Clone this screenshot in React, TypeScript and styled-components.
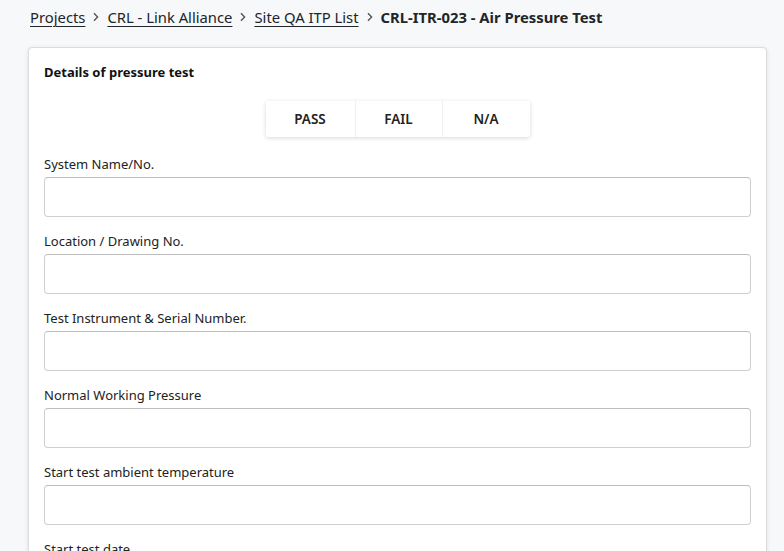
import React from "react";
import styled, { createGlobalStyle } from "styled-components";

const Global = createGlobalStyle`
  html, body { margin: 0; padding: 0; background: #f7f8f9; }
  body { font-family: "Segoe UI", "Noto Sans", "Liberation Sans", sans-serif; color: #212529; }
  * { box-sizing: border-box; }
`;

const Page = styled.div`
  padding: 5px 17px 0 28px;
  height: 551px;
  overflow: hidden;
`;

const Crumbs = styled.nav`
  display: flex;
  align-items: center;
  gap: 8px;
  padding-left: 2px;
  height: 24px;
  font-size: 14.8px;
  margin-bottom: 18px;
`;

const CrumbLink = styled.a`
  color: #212529;
  text-decoration: underline;
  text-underline-offset: 3px;
  text-decoration-thickness: 1px;
  cursor: pointer;
`;

const Current = styled.span`
  font-weight: 700;
  color: #212529;
`;

const Chevron = () => (
  <svg width="6" height="10" viewBox="0 0 6 10">
    <path d="M1 1.2 L4.6 5 L1 8.8" fill="none" stroke="#555" strokeWidth="1.4" />
  </svg>
);

const Card = styled.section`
  background: #fff;
  border: 1px solid #dcdcdc;
  border-radius: 4px;
  box-shadow: 0 1px 4px rgba(0, 0, 0, 0.1);
  padding: 15px 15px 0 15px;
  min-height: 600px;
`;

const CardTitle = styled.h2`
  margin: 0;
  font-size: 13px;
  font-weight: 700;
  line-height: 18px;
  color: #111;
`;

const ToggleRow = styled.div`
  display: flex;
  justify-content: center;
  margin: 20px 0 17px;
`;

const ToggleGroup = styled.div`
  display: flex;
  border-radius: 3px;
  box-shadow: 0 1px 4px rgba(0, 0, 0, 0.16);
  background: #fff;
`;

const ToggleButton = styled.button<{ $w: number }>`
  width: ${(p) => p.$w}px;
  height: 36px;
  border: none;
  background: #fff;
  font-family: inherit;
  font-size: 13.5px;
  font-weight: 600;
  color: #222;
  cursor: pointer;
  & + & { border-left: 1px solid #f1f1f1; }
  &:first-child { border-radius: 3px 0 0 3px; }
  &:last-child { border-radius: 0 3px 3px 0; }
`;

const Field = styled.div`
  display: flex;
  flex-direction: column;
  gap: 2px;
  margin-bottom: 14px;
`;

const Label = styled.label`
  font-size: 13px;
  line-height: 21px;
  color: #222;
`;

const Input = styled.input`
  height: 40px;
  width: 100%;
  border: 1px solid #cfcfcf;
  border-top-color: #bdbdbd;
  border-radius: 4px;
  background: #fff;
  font-family: inherit;
  font-size: 14px;
  padding: 0 10px;
`;

const fields = [
  "System Name/No.",
  "Location / Drawing No.",
  "Test Instrument & Serial Number.",
  "Normal Working Pressure",
  "Start test ambient temperature",
  "Start test date",
];

export default function App() {
  return (
    <>
      <Global />
      <Page>
        <Crumbs>
          <CrumbLink>Projects</CrumbLink>
          <Chevron />
          <CrumbLink>CRL - Link Alliance</CrumbLink>
          <Chevron />
          <CrumbLink>Site QA ITP List</CrumbLink>
          <Chevron />
          <Current>CRL-ITR-023 - Air Pressure Test</Current>
        </Crumbs>
        <Card>
          <CardTitle>Details of pressure test</CardTitle>
          <ToggleRow>
            <ToggleGroup>
              <ToggleButton $w={89}>PASS</ToggleButton>
              <ToggleButton $w={87}>FAIL</ToggleButton>
              <ToggleButton $w={88}>N/A</ToggleButton>
            </ToggleGroup>
          </ToggleRow>
          {fields.map((f) => (
            <Field key={f}>
              <Label>{f}</Label>
              <Input type="text" />
            </Field>
          ))}
        </Card>
      </Page>
    </>
  );
}
